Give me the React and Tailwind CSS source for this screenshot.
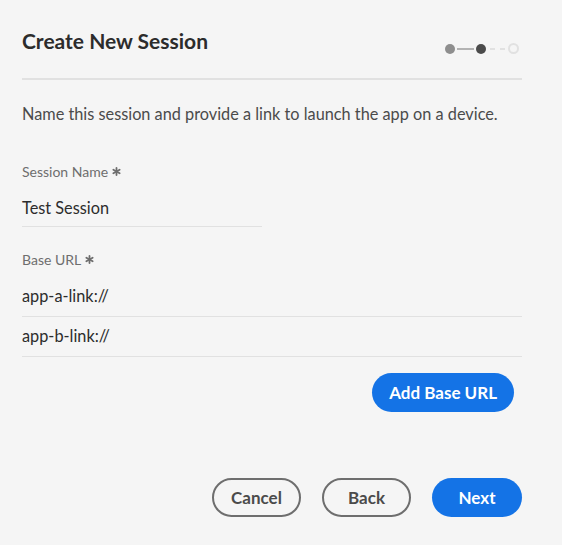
function Stepper() {
  return (
    <div className="flex items-center">
      <span className="w-[10px] h-[10px] rounded-full bg-[#8e8e8e]" />
      <span className="w-[17px] h-[2px] mx-[2px] bg-[#b3b3b3]" />
      <span className="w-[10px] h-[10px] rounded-full bg-[#4b4b4b]" />
      <span className="w-[5px] h-[2px] ml-[4px] bg-[#e1e1e1]" />
      <span className="w-[5px] h-[2px] ml-[5px] bg-[#e1e1e1]" />
      <span className="w-[11px] h-[11px] ml-[3px] rounded-full border-2 border-[#e1e1e1]" />
    </div>
  );
}

function Asterisk() {
  return (
    <svg width="9" height="9" viewBox="0 0 10 10" className="inline-block ml-[4px] mb-[3px]">
      <g stroke="#6e6e6e" strokeWidth="2" strokeLinecap="round">
        <line x1="5" y1="1" x2="5" y2="9" />
        <line x1="1.5" y1="3" x2="8.5" y2="7" />
        <line x1="1.5" y1="7" x2="8.5" y2="3" />
      </g>
    </svg>
  );
}

function Field({ value, className }) {
  return (
    <div className={"h-[40px] flex items-center border-b border-[#e1e1e1] text-[16.3px] text-[#2c2c2c] " + className}>
      {value}
    </div>
  );
}

export default function App() {
  return (
    <div
      className="w-[562px] h-[545px] bg-[#f5f5f5] pl-[22px] pr-[40px] pt-[27px]"
      style={{ fontFamily: "Lato, 'Open Sans', sans-serif" }}
    >
      <div className="flex items-center justify-between">
        <h1 className="text-[21px] leading-[28px] font-bold text-[#2c2c2c]">Create New Session</h1>
        <div className="mt-[15px] mr-[3px]">
          <Stepper />
        </div>
      </div>
      <div className="h-[2px] bg-[#e1e1e1] mt-[23px]" />

      <p className="mt-[22px] text-[16.3px] leading-[24px] text-[#4b4b4b]">
        Name this session and provide a link to launch the app on a device.
      </p>

      <div className="mt-[36px] text-[14px] leading-[20px] text-[#6e6e6e]">
        Session Name<Asterisk />
      </div>
      <Field value="Test Session" className="w-[240px] mt-[5px] pt-[3px]" />

      <div className="mt-[23px] text-[14px] leading-[20px] text-[#6e6e6e]">
        Base URL<Asterisk />
      </div>
      <Field value="app-a-link://" className="mt-[7px]" />
      <Field value="app-b-link://" />

      <div className="flex justify-end mt-[16px] pr-[8px]">
        <button className="h-[39px] px-[17px] rounded-full bg-[#1473e6] text-white text-[17px] font-bold">
          Add Base URL
        </button>
      </div>

      <div className="flex justify-end gap-[21px] mt-[66px]">
        <button className="h-[39px] w-[89px] rounded-full border-2 border-[#6e6e6e] text-[#4b4b4b] text-[17px] font-bold">
          Cancel
        </button>
        <button className="h-[39px] w-[89px] rounded-full border-2 border-[#6e6e6e] text-[#4b4b4b] text-[17px] font-bold">
          Back
        </button>
        <button className="h-[39px] w-[90px] rounded-full bg-[#1473e6] text-white text-[17px] font-bold">
          Next
        </button>
      </div>
    </div>
  );
}
